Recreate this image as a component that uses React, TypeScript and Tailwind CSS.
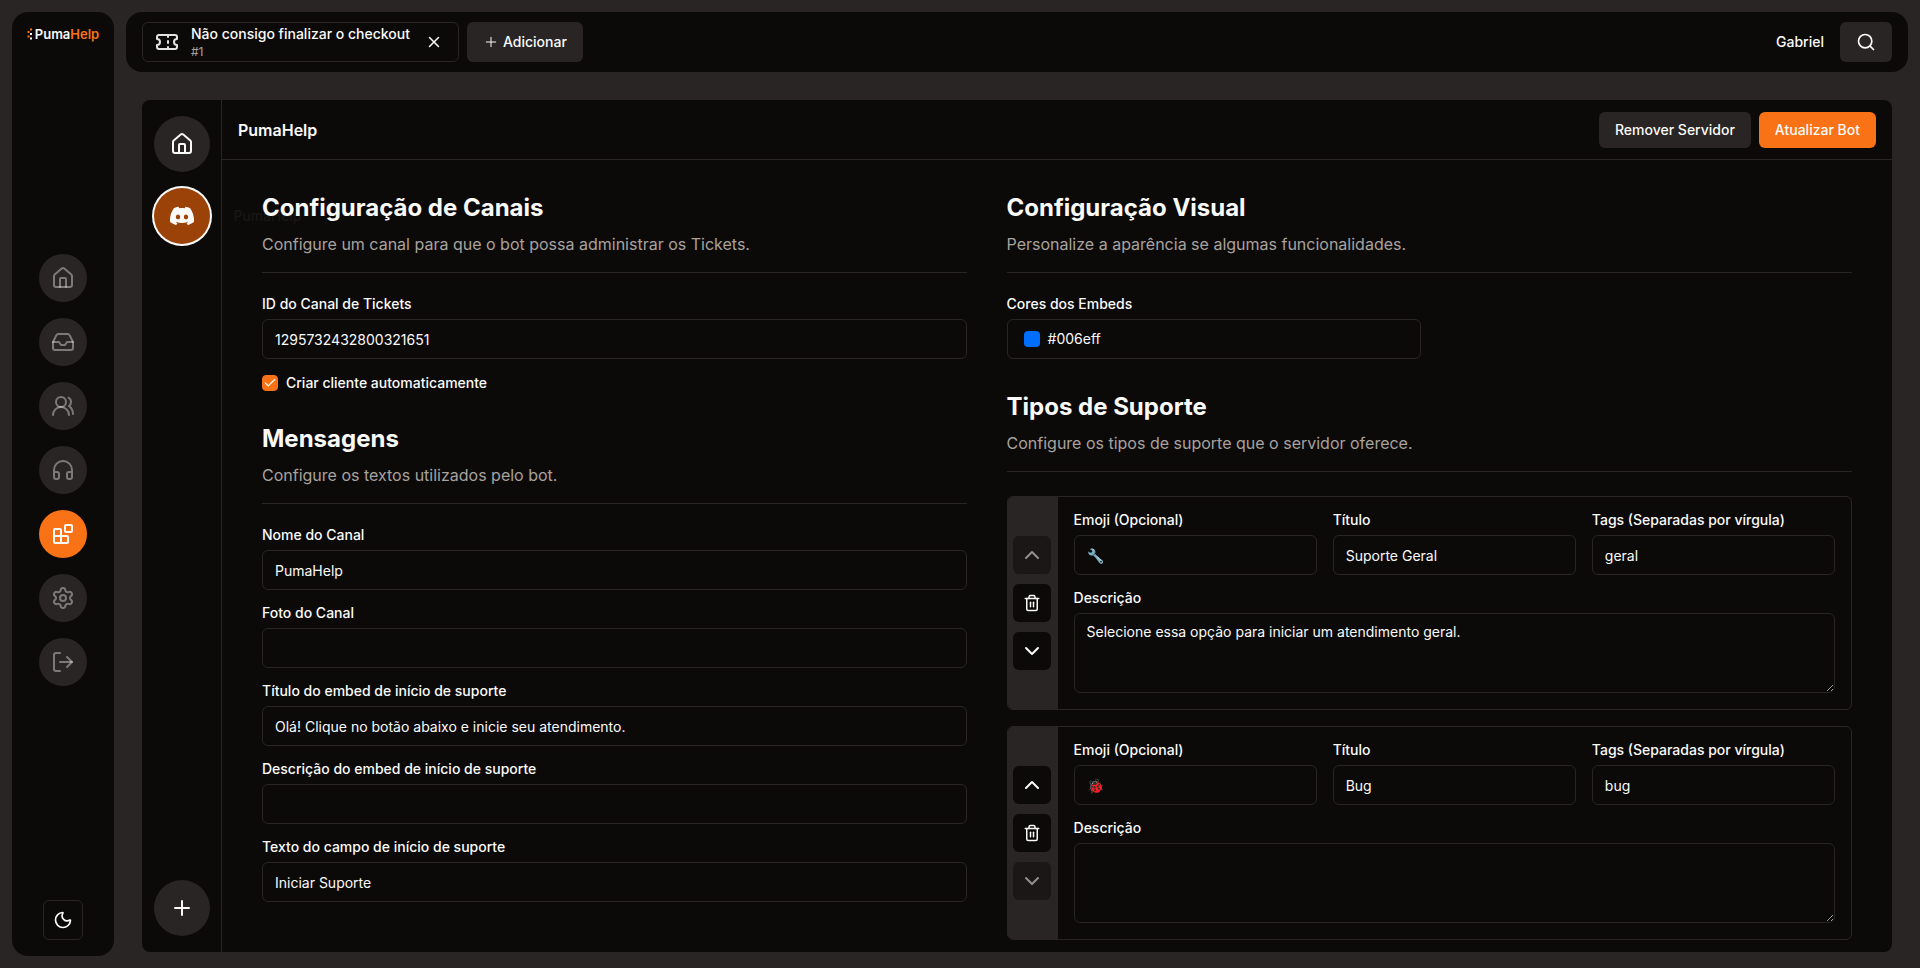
import type { ReactNode } from 'react';
import {
  Check,
  ChevronDown,
  ChevronUp,
  Headphones,
  House,
  Inbox,
  LogOut,
  Moon,
  Plus,
  Search,
  Settings,
  Ticket,
  Trash2,
  UsersRound,
  X,
} from 'lucide-react';
import { LuBlocks } from 'react-icons/lu';
import { SiDiscord } from 'react-icons/si';
import clsx from 'clsx';

type SupportType = {
  id: string;
  emoji: string;
  title: string;
  tags: string;
  description: string;
};

const navItems = [
  { label: 'Início', icon: House },
  { label: 'Tickets', icon: Inbox },
  { label: 'Clientes', icon: UsersRound },
  { label: 'Atendimento', icon: Headphones },
  { label: 'Integrações', icon: LuBlocks, active: true },
  { label: 'Configurações', icon: Settings },
  { label: 'Sair', icon: LogOut },
];

const messageFields = [
  { id: 'channel-name', label: 'Nome do Canal', value: 'PumaHelp' },
  { id: 'channel-photo', label: 'Foto do Canal', value: '' },
  {
    id: 'embed-title',
    label: 'Título do embed de início de suporte',
    value: 'Olá! Clique no botão abaixo e inicie seu atendimento.',
  },
  { id: 'embed-description', label: 'Descrição do embed de início de suporte', value: '' },
  { id: 'field-text', label: 'Texto do campo de início de suporte', value: 'Iniciar Suporte' },
];

const supportTypes: SupportType[] = [
  {
    id: 'general',
    emoji: '🔧',
    title: 'Suporte Geral',
    tags: 'geral',
    description: 'Selecione essa opção para iniciar um atendimento geral.',
  },
  { id: 'bug', emoji: '🐞', title: 'Bug', tags: 'bug', description: '' },
];

function Logo() {
  return (
    <a href="#" className="flex h-3 items-center justify-center gap-0.5" aria-label="PumaHelp">
      <svg viewBox="0 0 6 12" className="h-3 w-1.5" aria-hidden>
        <rect x="3" y="0.5" width="2" height="2" fill="#f97316" />
        <rect x="0.5" y="3" width="2" height="2" fill="#f97316" />
        <rect x="3" y="5" width="2" height="2" fill="#fafaf9" />
        <rect x="0.5" y="7.5" width="2" height="2" fill="#f97316" />
        <rect x="3" y="9.5" width="2" height="2" fill="#fafaf9" />
      </svg>
      <span className="text-[13px] leading-none font-semibold">
        Puma<span className="text-[#f97316]">Help</span>
      </span>
    </a>
  );
}

function Sidebar() {
  return (
    <aside className="flex w-[102px] shrink-0 flex-col items-center justify-between rounded-2xl bg-[#0c0a09] py-4">
      <Logo />
      <nav className="flex flex-col gap-4">
        {navItems.map(({ label, icon: Icon, active }) => (
          <a
            key={label}
            href="#"
            aria-label={label}
            className={clsx(
              'flex size-12 items-center justify-center rounded-full',
              active ? 'bg-[#f97316] text-[#fafaf9]' : 'bg-[#292524] text-[#fafaf9]/40',
            )}
          >
            <Icon className="size-6" />
          </a>
        ))}
      </nav>
      <button
        type="button"
        aria-label="Alternar tema"
        className="flex size-10 items-center justify-center rounded-md border border-[#292524]"
      >
        <Moon className="size-5" />
      </button>
    </aside>
  );
}

function Header() {
  return (
    <header className="flex items-center justify-between rounded-2xl bg-[#0c0a09] px-4 py-2.5">
      <div className="flex gap-2">
        <div className="flex h-10 items-center rounded-md border border-[#292524] px-3">
          <Ticket className="size-6 opacity-90" />
          <div className="ml-3">
            <p className="text-sm font-medium">Não consigo finalizar o checkout</p>
            <p className="text-xs text-[#a8a29e]">#1</p>
          </div>
          <button type="button" aria-label="Fechar" className="ml-3 p-[3px]">
            <X className="size-[18px]" />
          </button>
        </div>
        <button
          type="button"
          className="flex h-10 items-center gap-1 rounded-md bg-[#292524] px-4 text-sm font-medium"
        >
          <Plus className="size-4" strokeWidth={1.5} />
          Adicionar
        </button>
      </div>
      <div className="flex items-center gap-4">
        <span className="text-sm font-medium">Gabriel</span>
        <button type="button" aria-label="Buscar" className="flex h-10 items-center rounded-md bg-[#292524] px-4">
          <Search className="size-5" />
        </button>
      </div>
    </header>
  );
}

function ServerRail() {
  return (
    <div className="flex w-20 shrink-0 flex-col items-center gap-4 border-r border-[#292524] py-4">
      <button type="button" aria-label="Início" className="flex size-14 items-center justify-center rounded-full bg-[#292524]">
        <House className="size-6" />
      </button>
      <div className="relative">
        <button
          type="button"
          aria-label="Servidor PumaHelp"
          className="flex size-14 items-center justify-center rounded-full bg-[#9a4208] ring-2 ring-[#fafaf9]"
        >
          <SiDiscord className="size-6" />
        </button>
        {/* tooltip fading out, stays under the panel text */}
        <span className="pointer-events-none absolute top-1/2 left-full ml-6 -translate-y-1/2 text-sm opacity-5">
          PumaHelp
        </span>
      </div>
      <button
        type="button"
        aria-label="Adicionar servidor"
        className="mt-auto flex size-14 items-center justify-center rounded-full bg-[#292524]"
      >
        <Plus className="size-6" />
      </button>
    </div>
  );
}

function Section({ title, description, children }: { title: string; description: string; children: ReactNode }) {
  return (
    <section>
      <h2 className="text-2xl font-bold">{title}</h2>
      <p className="mt-2 text-base text-[#a8a29e]">{description}</p>
      <hr className="mt-4 mb-6 border-[#292524]" />
      {children}
    </section>
  );
}

function Field({ id, label, value }: { id: string; label: string; value: string }) {
  return (
    <div className="flex flex-col gap-2">
      <label htmlFor={id} className="text-sm leading-none font-medium">
        {label}
      </label>
      <input
        id={id}
        type="text"
        defaultValue={value}
        className="h-10 w-full rounded-md border border-[#292524] bg-[#0c0a09] px-3 py-2 text-sm"
      />
    </div>
  );
}

function MoveButton({ label, disabled, children }: { label: string; disabled?: boolean; children: ReactNode }) {
  return (
    <button
      type="button"
      aria-label={label}
      disabled={disabled}
      className="flex size-[38px] items-center justify-center rounded-md bg-[#0c0a09] disabled:opacity-50"
    >
      {children}
    </button>
  );
}

function SupportCard({ item, first, last }: { item: SupportType; first: boolean; last: boolean }) {
  return (
    <div className="flex overflow-hidden rounded-md border border-[#292524]">
      <div className="flex w-[50px] shrink-0 flex-col items-center justify-center gap-2.5 bg-[#292524] pr-0.5">
        <MoveButton label="Mover para cima" disabled={first}>
          <ChevronUp className="size-6" />
        </MoveButton>
        <MoveButton label="Remover">
          <Trash2 className="size-[18px]" />
        </MoveButton>
        <MoveButton label="Mover para baixo" disabled={last}>
          <ChevronDown className="size-6" />
        </MoveButton>
      </div>
      <div className="flex flex-1 flex-col gap-4 p-4">
        <div className="grid grid-cols-3 gap-4">
          <Field id={`${item.id}-emoji`} label="Emoji (Opcional)" value={item.emoji} />
          <Field id={`${item.id}-title`} label="Título" value={item.title} />
          <Field id={`${item.id}-tags`} label="Tags (Separadas por vírgula)" value={item.tags} />
        </div>
        <div className="flex flex-col gap-2">
          <label htmlFor={`${item.id}-description`} className="text-sm leading-none font-medium">
            Descrição
          </label>
          <textarea
            id={`${item.id}-description`}
            defaultValue={item.description}
            className="block min-h-20 w-full rounded-md border border-[#292524] bg-[#0c0a09] px-3 py-2 text-sm"
          />
        </div>
      </div>
    </div>
  );
}

function App() {
  return (
    <div className="flex min-h-screen gap-3 bg-[#292524] p-3 font-['Inter',sans-serif] text-[#fafaf9]">
      <Sidebar />
      <div className="flex min-w-0 flex-1 flex-col">
        <Header />
        <main className="flex flex-1 px-4 pt-7 pb-1">
          <div className="flex flex-1 rounded-lg bg-[#0c0a09]">
            <ServerRail />
            <div className="relative flex-1">
              <div className="flex h-[60px] items-center justify-between border-b border-[#292524] px-4">
                <h1 className="text-base font-semibold">PumaHelp</h1>
                <div className="flex gap-2">
                  <button type="button" className="h-9 rounded-md bg-[#292524] px-4 text-sm font-medium">
                    Remover Servidor
                  </button>
                  <button type="button" className="h-9 rounded-md bg-[#f97316] px-4 text-sm font-medium">
                    Atualizar Bot
                  </button>
                </div>
              </div>

              <div className="grid grid-cols-[5fr_6fr] gap-10 px-10 pt-8 pb-3">
                <div className="flex flex-col gap-8">
                  <Section
                    title="Configuração de Canais"
                    description="Configure um canal para que o bot possa administrar os Tickets."
                  >
                    <div className="flex flex-col gap-4">
                      <Field id="tickets-channel" label="ID do Canal de Tickets" value="1295732432800321651" />
                      <div className="flex items-center gap-2">
                        <span className="grid size-4 place-items-center">
                          <input
                            id="auto-client"
                            type="checkbox"
                            defaultChecked
                            className="col-start-1 row-start-1 size-4 appearance-none rounded-sm border border-[#f97316] checked:bg-[#f97316]"
                          />
                          <Check
                            className="pointer-events-none col-start-1 row-start-1 size-3.5"
                            strokeWidth={2}
                          />
                        </span>
                        <label htmlFor="auto-client" className="text-sm leading-none font-medium">
                          Criar cliente automaticamente
                        </label>
                      </div>
                    </div>
                  </Section>

                  <Section title="Mensagens" description="Configure os textos utilizados pelo bot.">
                    <div className="flex flex-col gap-4">
                      {messageFields.map((field) => (
                        <Field key={field.id} {...field} />
                      ))}
                    </div>
                  </Section>
                </div>

                <div className="flex flex-col gap-8">
                  <Section
                    title="Configuração Visual"
                    description="Personalize a aparência se algumas funcionalidades."
                  >
                    <div className="grid grid-cols-2 gap-4">
                      <div className="flex flex-col gap-2">
                        <label htmlFor="embed-color" className="text-sm leading-none font-medium">
                          Cores dos Embeds
                        </label>
                        <button
                          id="embed-color"
                          type="button"
                          className="flex h-10 items-center gap-2 rounded-md border border-[#292524] px-4 text-sm"
                        >
                          <span className="size-4 rounded-sm bg-[#006eff]" />
                          #006eff
                        </button>
                      </div>
                    </div>
                  </Section>

                  <Section title="Tipos de Suporte" description="Configure os tipos de suporte que o servidor oferece.">
                    <div className="flex flex-col gap-4">
                      {supportTypes.map((item, index) => (
                        <SupportCard
                          key={item.id}
                          item={item}
                          first={index === 0}
                          last={index === supportTypes.length - 1}
                        />
                      ))}
                    </div>
                  </Section>
                </div>
              </div>
            </div>
          </div>
        </main>
      </div>
    </div>
  );
}

export default App;
